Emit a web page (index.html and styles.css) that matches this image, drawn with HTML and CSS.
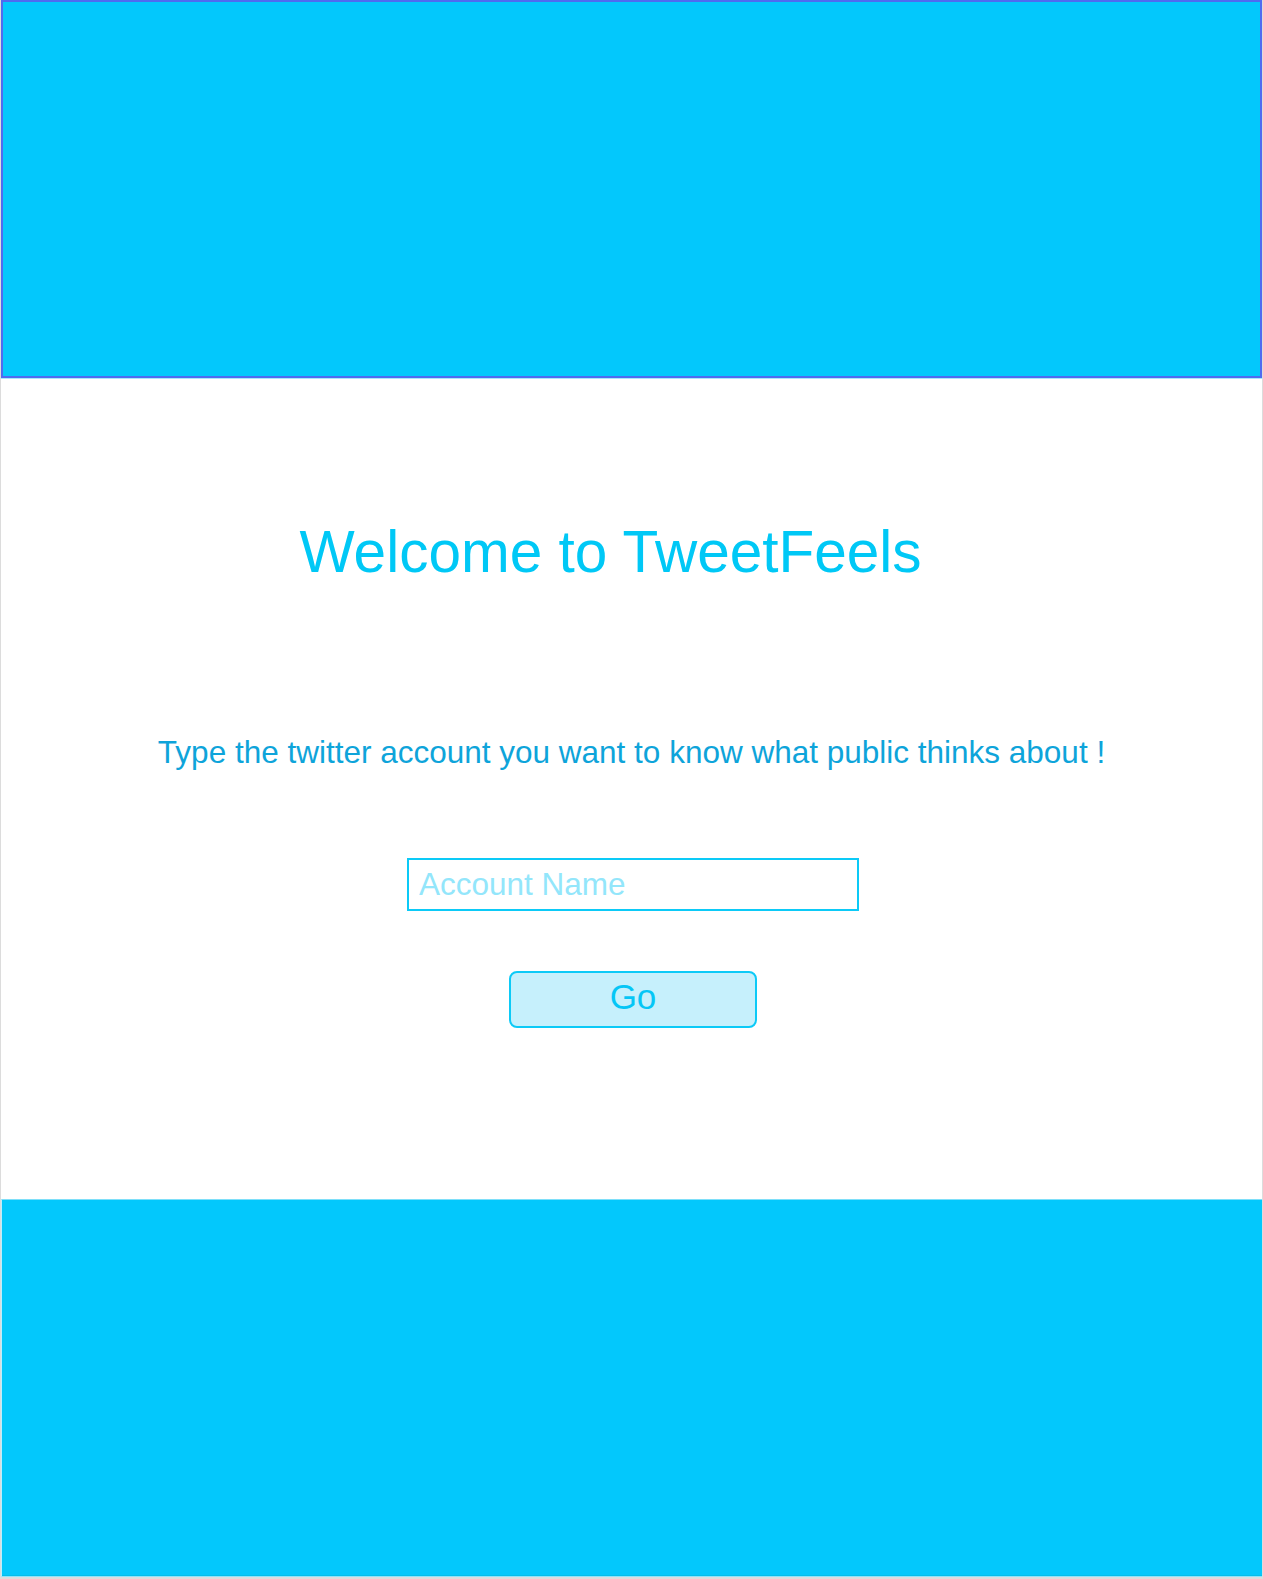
FILE: index.html
```html
<!DOCTYPE html>
<html lang="en">
<head>
<meta charset="utf-8">
<title>TweetFeels</title>
<link rel="stylesheet" href="styles.css">
</head>
<body>
<div class="page">
  <header class="top-band"></header>
  <main class="content">
    <h1 class="title">Welcome to TweetFeels</h1>
    <p class="subtitle">Type the twitter account you want to know what public thinks about !</p>
    <input class="account" type="text" placeholder="Account Name">
    <button class="go" type="button">Go</button>
  </main>
  <footer class="bottom-band"></footer>
</div>
</body>
</html>
```
FILE: styles.css
```css
html, body {
  margin: 0;
  padding: 0;
  background: #ffffff;
}

.page {
  width: 1263px;
  height: 1579px;
  box-sizing: border-box;
  border-left: 1px solid #dcdcdc;
  border-right: 1px solid #dcdcdc;
  border-bottom: 2px solid #dcdcdc;
  display: flex;
  flex-direction: column;
  font-family: "Liberation Sans", Arial, sans-serif;
}

.top-band {
  height: 378px;
  flex: none;
  box-sizing: border-box;
  background: #03c8fc;
  border: 2px solid #4f6bf0;
  box-shadow: 0 1px 0 #a6e9fc;
}

.content {
  flex: 1;
  display: flex;
  flex-direction: column;
  align-items: center;
  margin-top: 1px;
}

.title {
  margin: 144px 42px 0 0;
  font-size: 58.5px;
  line-height: 58px;
  font-weight: normal;
  color: #00c8f6;
}

.subtitle {
  margin: 156px 0 0 0;
  font-size: 31.5px;
  line-height: 31px;
  color: #0ea4da;
}

.account {
  margin: 90px 0 0 3px;
  width: 452px;
  height: 53px;
  box-sizing: border-box;
  border: 2px solid #0ccaf7;
  padding: 0 10px;
  font-family: "Liberation Sans", Arial, sans-serif;
  font-size: 31.5px;
  color: #0aa4da;
  outline: none;
  background: #ffffff;
}

.account::placeholder {
  color: #93e6fb;
}

.go {
  margin-top: 60px;
  width: 248px;
  height: 57px;
  box-sizing: border-box;
  border: 2px solid #0ccaf7;
  border-radius: 8px;
  background: #c6f0fc;
  color: #05c6f6;
  font-family: "Liberation Sans", Arial, sans-serif;
  font-size: 35px;
  line-height: 1;
  padding: 0 0 6px 0;
  margin-left: 3px;
}

.bottom-band {
  height: 378px;
  flex: none;
  box-sizing: border-box;
  background: #03c8fc;
  border-top: 1px solid #7edff9;
  border-left: 1px solid #bfeefb;
  border-bottom: 1px solid #8fe3fa;
  box-shadow: inset 0 -1px 0 #05bde9;
}
```
